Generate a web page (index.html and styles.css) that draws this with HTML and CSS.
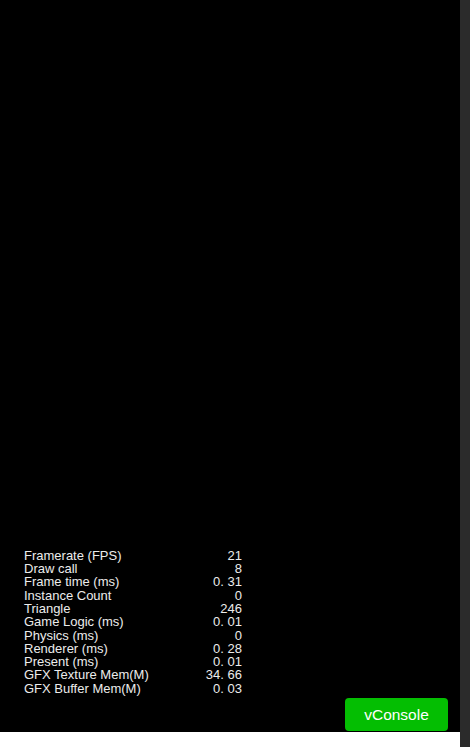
FILE: index.html
```html
<!DOCTYPE html>
<html>
<head>
<meta charset="utf-8">
<link rel="stylesheet" href="styles.css">
</head>
<body>
<div class="page">
  <div class="main">
    <div class="stage">
      <div class="stats">
        <span class="lbl">Framerate (FPS)</span><span class="val">21</span>
        <span class="lbl">Draw call</span><span class="val">8</span>
        <span class="lbl">Frame time (ms)</span><span class="val">0. 31</span>
        <span class="lbl">Instance Count</span><span class="val">0</span>
        <span class="lbl">Triangle</span><span class="val">246</span>
        <span class="lbl">Game Logic (ms)</span><span class="val">0. 01</span>
        <span class="lbl">Physics (ms)</span><span class="val">0</span>
        <span class="lbl">Renderer (ms)</span><span class="val">0. 28</span>
        <span class="lbl">Present (ms)</span><span class="val">0. 01</span>
        <span class="lbl">GFX Texture Mem(M)</span><span class="val">34. 66</span>
        <span class="lbl">GFX Buffer Mem(M)</span><span class="val">0. 03</span>
      </div>
      <div class="btn-row">
        <div class="vc-btn">vConsole</div>
      </div>
    </div>
    <div class="footer"></div>
  </div>
  <div class="scrollbar"></div>
</div>
</body>
</html>
```

FILE: styles.css
```css
html, body {
  margin: 0;
  padding: 0;
  background: #ffffff;
}
.page {
  display: flex;
  width: 470px;
  height: 747px;
  overflow: hidden;
}
.main {
  width: 460px;
  display: flex;
  flex-direction: column;
}
.stage {
  height: 732px;
  background: #000000;
  display: flex;
  flex-direction: column;
  justify-content: flex-end;
  padding-bottom: 1px;
  box-sizing: border-box;
}
.stats {
  display: grid;
  grid-template-columns: 1fr auto;
  width: 218px;
  margin-left: 24px;
  font-family: "Liberation Sans", Arial, sans-serif;
  font-size: 13px;
  line-height: 13.3px;
  color: #ececec;
}
.val {
  text-align: right;
}
.btn-row {
  display: flex;
  justify-content: flex-end;
  padding-right: 12px;
  margin-top: 3px;
}
.vc-btn {
  width: 103px;
  height: 33px;
  background: #04be02;
  border-radius: 4px;
  color: #ffffff;
  font-family: "Liberation Sans", Arial, sans-serif;
  font-size: 15.5px;
  display: flex;
  align-items: center;
  justify-content: center;
}
.footer {
  flex: 1;
  background: #ffffff;
}
.scrollbar {
  width: 10px;
  background: #2b2b2b;
}
```
